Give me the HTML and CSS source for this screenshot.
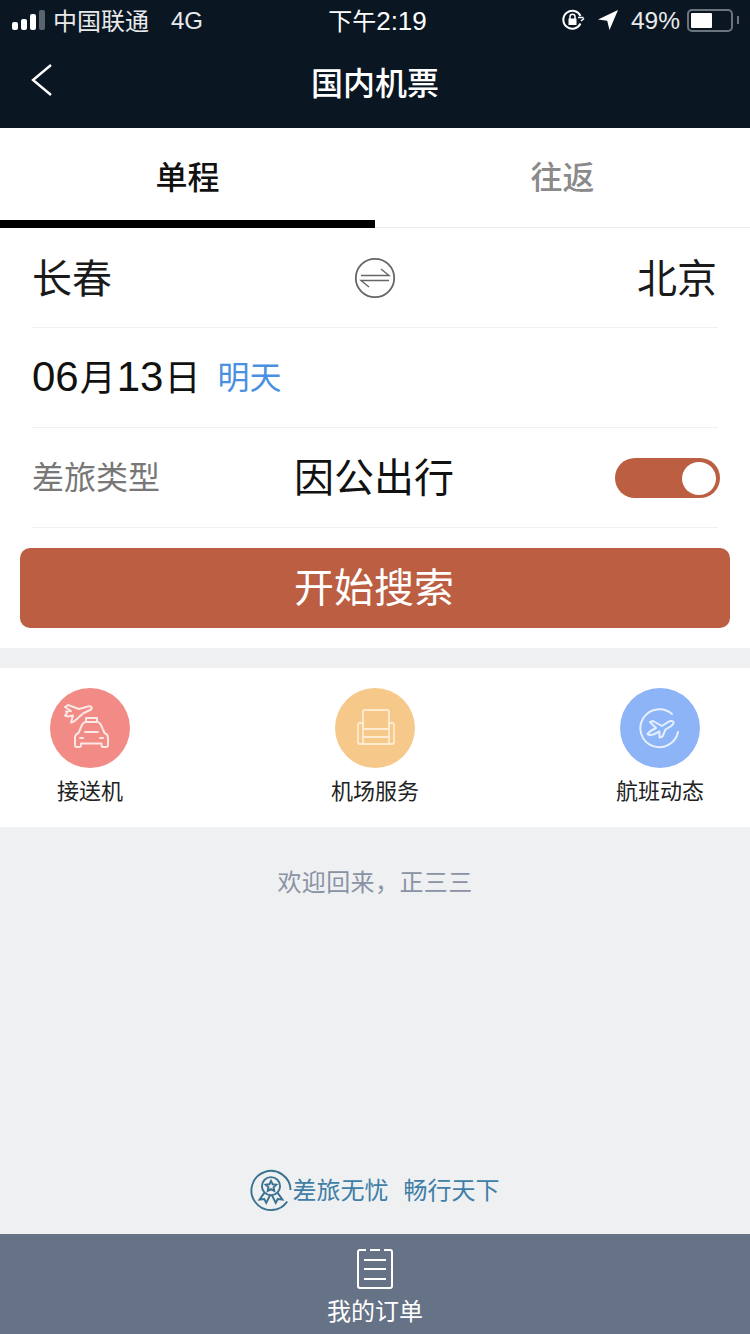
FILE: index.html
```html
<!DOCTYPE html>
<html lang="zh">
<head>
  <meta charset="utf-8">
  <title>国内机票</title>
  <link rel="stylesheet" href="styles.css">
</head>
<body>
  <div class="page">
    <header class="top">
      <div class="status">
        <div class="status-left">
          <span class="signal"><i></i><i></i><i></i><i class="off"></i></span>
          <span class="carrier">中国联通</span>
          <span class="net">4G</span>
        </div>
        <div class="status-time">下午<span class="digits">2:19</span></div>
        <div class="status-right">
          <svg class="lock-icon" width="24" height="24" viewBox="0 0 24 24" fill="none" stroke="#fff" stroke-width="2"><path d="M19.5 15.5A9 9 0 1 1 19.5 8"/><path d="M17 9.500h5.500M20 13l3-2.500" stroke-width="1.600"/><rect x="7.500" y="10.500" width="8" height="6.500" fill="#fff" stroke="none"/><path d="M9 11V8.800a2.500 2.500 0 0 1 5 0V11" stroke-width="1.500"/></svg>
          <svg class="loc-icon" width="20" height="20" viewBox="0 0 20 20"><path d="M20 0 0 9.500l9.200 1.300L11.500 20z" fill="#fff"/></svg>
          <span class="percent">49%</span>
          <span class="battery"><span class="battery-fill"></span></span>
          <span class="battery-tip"></span>
        </div>
      </div>
      <div class="nav">
        <svg class="back" width="24" height="36" viewBox="0 0 24 36" fill="none" stroke="#fff" stroke-width="2.400"><path d="M21 3 3 18l18 15"/></svg>
        <h1>国内机票</h1>
      </div>
    </header>

    <div class="tabs">
      <div class="tab active">单程</div>
      <div class="tab">往返</div>
    </div>

    <section class="form">
      <div class="row route">
        <span class="city">长春</span>
        <svg class="swap" width="42" height="42" viewBox="0 0 42 42" fill="none" stroke="#666"><circle cx="21" cy="21" r="19.200" stroke-width="1.800"/><path d="M7 18.500h28L27 12M35 23.500H7l8 6.500" stroke-width="1.400"/></svg>
        <span class="city">北京</span>
      </div>
      <div class="row date">
        <span class="date-text">06<span class="date-unit">月</span>13<span class="date-unit">日</span></span>
        <span class="date-note">明天</span>
      </div>
      <div class="row trip">
        <span class="trip-label">差旅类型</span>
        <span class="trip-value">因公出行</span>
        <span class="switch"><span class="knob"></span></span>
      </div>
    </section>
    <div class="search-wrap">
      <button class="search" type="button"><span>开始搜索</span></button>
    </div>

    <nav class="services">
      <div class="service">
        <span class="circle red">
          <svg width="80" height="80" viewBox="0 0 80 80" fill="none" stroke="#fbe7e4" stroke-width="2" stroke-linejoin="round" stroke-linecap="round">
            <path d="m15 19 3-2 11 4 9-2.500c3-.8 5 1 3 3l-8 4-9 8-3 1 2-7-5 1-3-1 2-2.500-1-1.500 5-.5z"/>
            <path d="M36 34v-4h11v4"/>
            <path d="M36 34h11c2 0 3 1 4 3l3.500 8c2.500 1 3.500 3 3.500 5v7q0 2-2 2h-3q-1.500 0-1.500-2v-1.500H31V57q0 2-1.500 2h-3q-1.500 0-1.500-2v-7c0-2 1-4 3.500-5l3.500-8c1-2 2-3 4-3z"/>
            <path d="M35 44h13M30 50h3M50 50h3"/>
          </svg>
        </span>
        <span class="service-name">接送机</span>
      </div>
      <div class="service">
        <span class="circle orange">
          <svg width="80" height="80" viewBox="0 0 80 80" fill="none" stroke="#fdeccf" stroke-width="1.800">
            <path d="M28 40V24a2 2 0 0 1 2-2h22a2 2 0 0 1 2 2v16"/>
            <path d="M28 41h26M28 49h26M28 56h26"/>
            <path d="M28 35h-3a2 2 0 0 0-2 2v17a2 2 0 0 0 2 2h32a2 2 0 0 0 2-2V37a2 2 0 0 0-2-2h-3v21M28 35v21"/>
          </svg>
        </span>
        <span class="service-name">机场服务</span>
      </div>
      <div class="service">
        <span class="circle blue">
          <svg width="80" height="80" viewBox="0 0 80 80" fill="none" stroke="#e6f0ff" stroke-width="2" stroke-linejoin="round" stroke-linecap="round">
            <path d="M52 26A19 19 0 1 0 58 44"/>
            <path d="m30 34 3-1 9 5 6-4c2-1.500 5-1.500 5.500 0 .5 1.500-1 3-3 4.500l-5 3-3 7-3 1v-6l-6 3-4 .5-2-1 3-3 5.500-3z"/>
          </svg>
        </span>
        <span class="service-name">航班动态</span>
      </div>
    </nav>

    <main class="welcome">
      <p class="welcome-text">欢迎回来，正三三</p>
      <div class="slogan">
        <svg width="42" height="42" viewBox="0 0 44 44" fill="none" stroke="#3a7292" stroke-width="2"><path d="M39 34A20.500 20.500 0 1 1 42.500 22"/><circle cx="22" cy="18" r="9.500"/><path d="m22 12.500 1.700 3.500 3.800.5-2.800 2.600.7 3.800-3.400-1.900-3.400 1.900.7-3.800-2.800-2.600 3.800-.5z"/><path d="m15 25-5 7 5-.5 2 4 4-8M29 25l5 7-5-.5-2 4-4-8"/></svg>
        <span class="slogan-text">差旅无忧</span>
        <span class="slogan-text second">畅行天下</span>
      </div>
    </main>

    <footer class="orders">
      <svg width="38" height="42" viewBox="0 0 38 42" fill="none" stroke="#fff" stroke-width="2"><path d="M10 2H4a2 2 0 0 0-2 2v34a2 2 0 0 0 2 2h30a2 2 0 0 0 2-2V4a2 2 0 0 0-2-2h-6M14 2h10"/><path d="M8 12h22M8 21h22M8 31h22"/></svg>
      <span>我的订单</span>
    </footer>
  </div>
</body>
</html>
```

FILE: styles.css
```css
* {
  box-sizing: border-box;
}

html, body {
  margin: 0;
  padding: 0;
}

body {
  font-family: "Noto Sans CJK SC", "Noto Sans", sans-serif;
  background: #eff0f2;
}

.page {
  width: 750px;
  height: 1334px;
  display: flex;
  flex-direction: column;
  overflow: hidden;
}

.top {
  height: 128px;
  background: #0a1723;
  color: #fff;
}

.status {
  height: 40px;
  display: grid;
  grid-template-columns: 1fr auto 1fr;
  align-items: center;
  padding: 0 12px;
  font-family: "Liberation Sans", "Noto Sans CJK SC", sans-serif;
  font-size: 24px;
  color: #e8eaec;
}

.status-left {
  display: flex;
  align-items: center;
}

.signal {
  display: flex;
  align-items: flex-end;
  gap: 3px;
  height: 20px;
  margin-right: 8px;
}

.signal i {
  width: 6px;
  background: #fff;
  border-radius: 2px;
}

.signal i:nth-child(1) { height: 8px; }
.signal i:nth-child(2) { height: 11px; }
.signal i:nth-child(3) { height: 16px; }
.signal i:nth-child(4) { height: 20px; }

.signal i.off {
  background: #5b636c;
}

.carrier {
  margin-top: -2px;
}

.net {
  margin-left: 22px;
  margin-top: 2px;
}

.status-time {
  margin: -2px 0 0 5px;
  color: #fff;
}

.digits {
  font-size: 26px;
}

.status-right {
  display: flex;
  align-items: center;
  justify-content: flex-end;
}

.lock-icon {
  margin-right: 13px;
}

.loc-icon {
  margin-right: 13px;
}

.percent {
  font-size: 24.5px;
  margin-top: 1px;
}

.battery {
  width: 46px;
  height: 23px;
  margin-left: 7px;
  padding: 2px;
  border: 2px solid #6b747d;
  border-radius: 5px;
}

.battery-fill {
  display: block;
  width: 21px;
  height: 15px;
  background: #fff;
  border-radius: 1px;
}

.battery-tip {
  width: 2px;
  height: 8px;
  margin: 0 -1px 0 4px;
  background: #6b747d;
}

.nav {
  height: 88px;
  position: relative;
  display: flex;
  justify-content: center;
  align-items: center;
}

.nav h1 {
  margin: 0 0 6px;
  font-size: 32px;
  font-weight: 500;
  line-height: 1;
}

.back {
  position: absolute;
  left: 30px;
  top: 22px;
}

.tabs {
  height: 100px;
  display: flex;
  background: #fff;
  border-bottom: 1px solid #eeeeee;
}

.tab {
  flex: 1;
  height: 100px;
  padding-top: 22px;
  text-align: center;
  font-size: 32px;
  line-height: 50px;
  color: #8a8a8a;
  font-weight: 500;
}

.tab.active {
  color: #111;
  border-bottom: 8px solid #000;
}

.form {
  background: #fff;
  padding: 0 32px;
}

.row {
  height: 100px;
  display: flex;
  align-items: center;
  border-bottom: 1px solid #f0f0f0;
}

.route {
  justify-content: space-between;
  padding: 0 1px 0 0;
}

.city {
  margin-top: -4px;
  font-size: 40px;
  color: #1a1a1a;
  line-height: 1;
}

.date-text {
  margin-top: -5px;
  font-family: "Liberation Sans", "Noto Sans CJK SC", sans-serif;
  font-size: 42px;
  color: #111;
}

.date-unit {
  margin: 0 1px;
  font-size: 36px;
}

.date-note {
  margin-left: 16px;
  margin-top: -5px;
  font-size: 32px;
  color: #4a90e2;
}

.trip-label {
  width: 262px;
  margin-top: -5px;
  font-size: 32px;
  color: #777;
}

.trip-value {
  margin-top: -5px;
  font-size: 40px;
  color: #111;
}

.switch {
  margin-left: auto;
  margin-right: -2px;
  width: 105px;
  height: 40px;
  padding: 4px;
  display: flex;
  justify-content: flex-end;
  background: #bc5e42;
  border-radius: 20px;
}

.knob {
  width: 34px;
  height: 33px;
  background: #fff;
  border-radius: 50%;
}

.search-wrap {
  background: #fff;
  padding: 20px;
}

.search {
  display: block;
  width: 710px;
  height: 80px;
  padding: 0 2px 6px 0;
  border: none;
  border-radius: 10px;
  background: #bc5e42;
  color: #fff;
  font-family: inherit;
  font-size: 40px;
}

.services {
  height: 159px;
  margin-top: 20px;
  padding: 20px 50px 0;
  display: flex;
  justify-content: space-between;
  background: #fff;
}

.service {
  width: 80px;
  display: flex;
  flex-direction: column;
  align-items: center;
}

.circle {
  width: 80px;
  height: 80px;
  display: flex;
  justify-content: center;
  align-items: center;
  border-radius: 50%;
}

.circle.red { background: #f28a86; }
.circle.orange { background: #f6c98a; }
.circle.blue { background: #8db4f7; }

.service-name {
  margin-top: 4px;
  font-size: 22px;
  line-height: 34px;
  color: #222;
  white-space: nowrap;
}

.welcome {
  flex: 1;
  display: flex;
  flex-direction: column;
  justify-content: space-between;
  align-items: center;
  padding: 37px 0 23px;
}

.welcome-text {
  margin: 0;
  font-size: 24px;
  letter-spacing: .4px;
  line-height: 34px;
  color: #8a93a5;
}

.slogan {
  display: flex;
  align-items: center;
  font-size: 24px;
  color: #3f7ea6;
  margin-right: 1px;
}

.slogan-text {
  margin: -4px 0 0 1px;
}

.slogan-text.second {
  margin-left: 15px;
}

.orders {
  height: 100px;
  padding-top: 14px;
  display: flex;
  flex-direction: column;
  align-items: center;
  background: #667286;
  color: #fff;
  font-size: 24px;
  line-height: 34px;
}

.orders svg {
  margin-bottom: 3px;
}
```
